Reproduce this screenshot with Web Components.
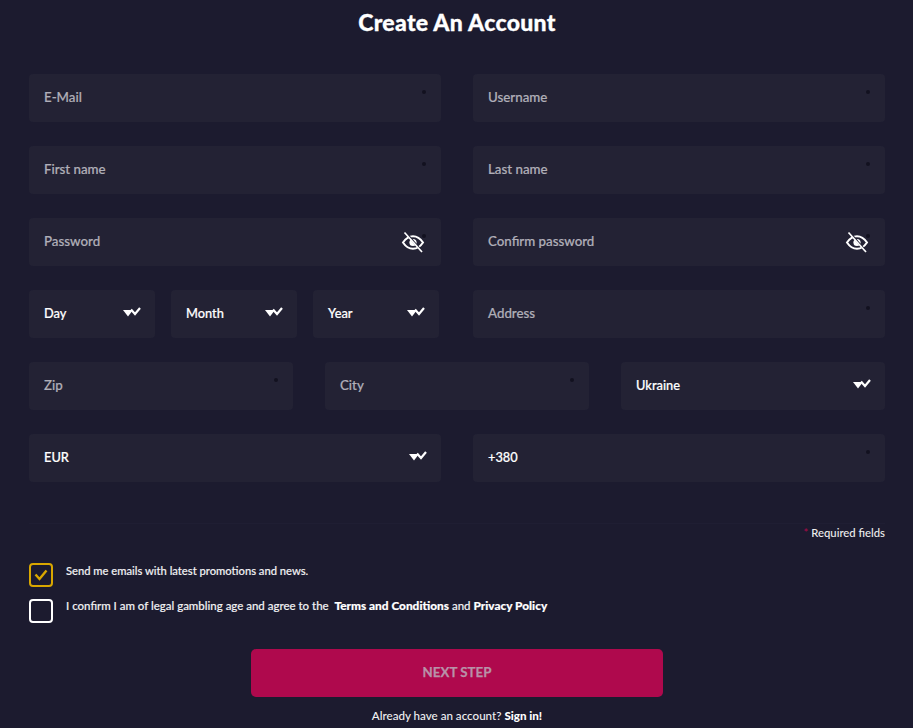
<!DOCTYPE html>
<html>
<head>
<meta charset="utf-8">
<title>Create An Account</title>
<style>
  html, body { margin: 0; height: 728px; overflow: hidden; background: #1c1b2f; }
  body { font-family: "Lato", "Liberation Sans", sans-serif; color: #fff; }
</style>
</head>
<body>
<signup-form></signup-form>

<script>
const eyeIcon = `<svg class="eye" width="24" height="24" viewBox="0 0 24 24" fill="none" stroke="#fff">
  <path stroke-width="2" d="M2 12.5C5 8 8.400 6.200 12 6.200S19 8 22 12.500C19 17 15.600 18.800 12 18.800S5 17 2 12.500Z"/>
  <circle cx="12" cy="12.500" r="3.600" fill="#fff" stroke="none"/>
  <path stroke-width="2" stroke="#232234" d="M5.500 3.500L20.500 21"/>
  <path stroke-width="1.700" d="M3.500 2.500L21 22"/>
</svg>`;

const chevronIcon = `<svg class="chev" width="18" height="10" viewBox="0 0 18 10">
  <path fill="#fff" d="M0 3H10L5 9.500Z"/>
  <path fill="none" stroke="#fff" stroke-width="2.200" d="M8 2.500L12 7L17 1"/>
</svg>`;

class FormField extends HTMLElement {
  constructor() {
    super();
    this.attachShadow({ mode: 'open' });
    const filled = this.hasAttribute('filled');
    const icon = this.hasAttribute('eye') ? eyeIcon : this.hasAttribute('select') ? chevronIcon : '';
    this.shadowRoot.innerHTML = `
      <style>
        :host { display: flex; align-items: center; box-sizing: border-box; position: relative;
          height: 48px; padding: 0 15px; background: #232234; border-radius: 4px; }
        .label { flex: 1; padding-bottom: 3px; font-size: 13.300px; font-weight: 500; color: #b0afb8; white-space: nowrap; -webkit-text-stroke: .2px currentColor; }
        .filled { color: #fff; font-size: 12.800px; }
        .star { position: absolute; top: 16px; right: 15px; width: 4px; height: 4px; border-radius: 50%; background: #12111f; }
        .eye { margin-right: 1px; }
        .chev { margin-right: -1px; margin-top: -4px; }
      </style>
      <span class="label ${filled ? 'filled' : ''}"><slot></slot></span>
      ${icon}
      ${this.hasAttribute('nostar') ? '' : '<span class="star"></span>'}`;
  }
}
customElements.define('form-field', FormField);

class FormCheck extends HTMLElement {
  constructor() {
    super();
    this.attachShadow({ mode: 'open' });
    const on = this.hasAttribute('checked');
    this.shadowRoot.innerHTML = `
      <style>
        :host { display: flex; align-items: center; gap: 13px; font-weight: 500; color: #f1f1f3; white-space: pre; -webkit-text-stroke: .15px currentColor; }
        .box { box-sizing: border-box; width: 24px; height: 24px; border: 2px solid #fff; border-radius: 4px;
          display: flex; align-items: center; justify-content: center; }
        .on { border-color: #d9a700; }
        .text { padding-bottom: 10px; }
      </style>
      <span class="box ${on ? 'on' : ''}">${on ? `<svg width="14" height="12" viewBox="0 0 14 12" fill="none" stroke="#d9a700" stroke-width="2.400"><path d="M1.500 5.500L5.500 10L12.500 1.500"/></svg>` : ''}</span>
      <span class="text"><slot></slot></span>`;
  }
}
customElements.define('form-check', FormCheck);

class SubmitButton extends HTMLElement {
  constructor() {
    super();
    this.attachShadow({ mode: 'open' });
    this.shadowRoot.innerHTML = `
      <style>
        :host { display: flex; align-items: center; justify-content: center; box-sizing: border-box; width: 412px; height: 48px; padding-bottom: 3px;
          background: #af094d; border-radius: 5px; color: #b892a8; font-size: 13.300px; font-weight: 700; -webkit-text-stroke: .25px currentColor; }
      </style>
      <slot></slot>`;
  }
}
customElements.define('submit-button', SubmitButton);

const formTemplate = document.createElement('template');
formTemplate.innerHTML = `
  <style>
    :host { display: block; box-sizing: border-box; width: 913px; height: 728px; padding: 0 28px 0 29px; }
    h1 { margin: 0; padding-top: 8px; height: 74px; box-sizing: border-box; text-align: center;
      font-size: 23px; line-height: 28px; font-weight: 900; letter-spacing: .3px; -webkit-text-stroke: .3px #fff; }
    .rows { display: flex; flex-direction: column; gap: 24px; }
    .two { display: grid; grid-template-columns: 412px 412px; column-gap: 32px; }
    .three { display: grid; grid-template-columns: repeat(3, 264px); column-gap: 32px; }
    .date { display: grid; grid-template-columns: repeat(3, 126px); column-gap: 16px; }
    .req { margin-top: 41px; padding-top: 1px; height: 37px; box-sizing: border-box; text-align: right; border-top: 1px solid #1f1e33;
      font-size: 11.300px; line-height: 16px; font-weight: 500; color: #eee; }
    .req i { font-style: normal; color: #a50a47; }
    .checks { display: flex; flex-direction: column; gap: 11px; margin-top: 3px; }
    .send { font-size: 11.200px; }
    .confirm { font-size: 11.480px; }
    .confirm b { font-size: 11.850px; }
    b { font-weight: 900; color: #fff; }
    .action { display: flex; flex-direction: column; align-items: center; margin-top: 26px; }
    .signin { margin-top: 11px; font-size: 11.600px; line-height: 16px; font-weight: 500; color: #f1f1f3; }
  </style>
  <h1>Create An Account</h1>
  <div class="rows">
    <div class="two"><form-field>E-Mail</form-field><form-field>Username</form-field></div>
    <div class="two"><form-field>First name</form-field><form-field>Last name</form-field></div>
    <div class="two"><form-field eye>Password</form-field><form-field eye>Confirm password</form-field></div>
    <div class="two">
      <div class="date">
        <form-field select filled nostar>Day</form-field>
        <form-field select filled nostar>Month</form-field>
        <form-field select filled nostar>Year</form-field>
      </div>
      <form-field>Address</form-field>
    </div>
    <div class="three"><form-field>Zip</form-field><form-field>City</form-field><form-field select filled nostar>Ukraine</form-field></div>
    <div class="two"><form-field select filled nostar>EUR</form-field><form-field filled>+380</form-field></div>
  </div>
  <div class="req"><i>*</i> Required fields</div>
  <div class="checks">
    <form-check checked class="send">Send me emails with latest promotions and news.</form-check>
    <form-check class="confirm">I confirm I am of legal gambling age and agree to the  <b>Terms and Conditions</b> and <b>Privacy Policy</b></form-check>
  </div>
  <div class="action">
    <submit-button>NEXT STEP</submit-button>
    <div class="signin">Already have an account? <b>Sign in!</b></div>
  </div>`;

class SignupForm extends HTMLElement {
  constructor() {
    super();
    this.attachShadow({ mode: 'open' });
    this.shadowRoot.appendChild(formTemplate.content.cloneNode(true));
  }
}
customElements.define('signup-form', SignupForm);
</script>
</body>
</html>
